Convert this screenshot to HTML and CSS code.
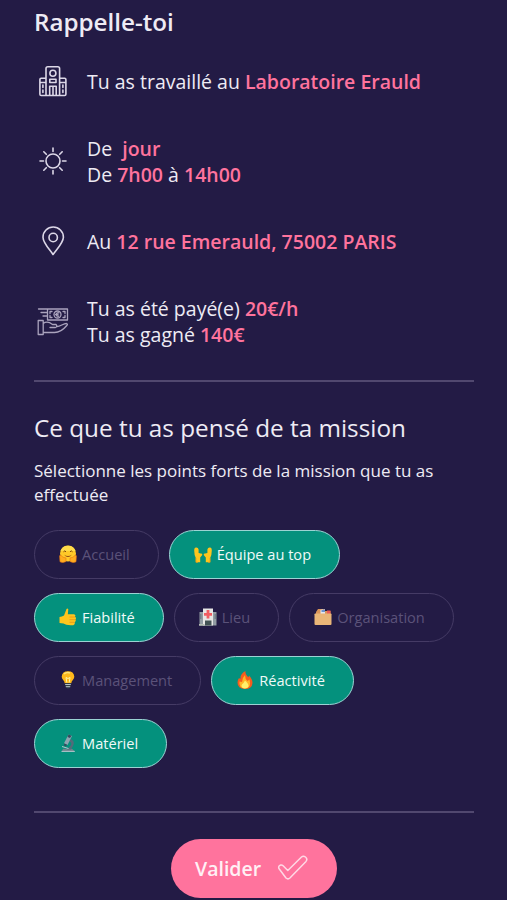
FILE: index.html
```html
<!DOCTYPE html>
<html lang="fr">
<head>
    <meta charset="UTF-8">
    <meta name="viewport" content="width=device-width, initial-scale=1.0">
    <title>Évaluation de la mission</title>
    <link rel="stylesheet" href="styles.css">
</head>
<body>

    <main class="page">
        <!-- Rappel de la mission -->
        <h1 class="recap-title">Rappelle-toi</h1>

        <ul class="recap">
            <li class="lab">
                <svg class="ico" viewBox="0 0 32 32">
                    <path d="M9 30.500V3.500Q9 1.700 10.800 1.700H20.800Q22.600 1.700 22.600 3.500V30.500M9 13.300H4.200Q2.900 13.300 2.900 14.600V29.200Q2.900 30.500 4.200 30.500H27.600Q28.900 30.500 28.900 29.200V14.600Q28.900 13.300 27.600 13.300H22.600M3 17.500H9M22.600 17.500H29"/>
                    <circle cx="15.900" cy="8.200" r="3"/>
                    <path d="M12.800 14.200H19V17.500H12.800ZM12.700 30V21.300H19.200V30M16 21.500V30M5.900 20V22.500M5.900 25V27.500M25.900 20V22.500M25.900 25V27.500"/>
                </svg>
                <p>Tu as travaillé au <b>Laboratoire Erauld</b></p>
            </li>
            <li class="hours">
                <svg class="ico" viewBox="0 0 32 32">
                    <circle cx="16" cy="16" r="7"/>
                    <path d="M16 3V6.500M16 25.500V29M3 16H6.500M25.500 16H29M6.800 6.800L9.300 9.300M22.700 22.700L25.200 25.200M6.800 25.200L9.300 22.700M22.700 9.300L25.200 6.800"/>
                </svg>
                <p>De&nbsp; <b>jour</b><br>De <b>7h00</b> à <b>14h00</b></p>
            </li>
            <li class="place">
                <svg class="ico" viewBox="0 0 32 32">
                    <path d="M16 29.500C13.500 25.500 6 18 6 12.200A10.200 10.200 0 0 1 26.400 12.200C26.400 18 18.500 25.500 16 29.500Z"/>
                    <circle cx="16.200" cy="12.500" r="4.200"/>
                </svg>
                <p>Au <b>12 rue Emerauld, 75002 PARIS</b></p>
            </li>
            <li class="pay">
                <svg class="ico thin" viewBox="0 0 32 32">
                    <path d="M10.500 4H30.500V15H10.500ZM1.500 4H10.500M4 7.500H10.500M6 11H10.500M13 8.500V6.500H15M26 6.500H28V8.500M13 10.500V12.500H15M26 12.500H28V10.500"/>
                    <circle cx="20.500" cy="9.500" r="3.500"/>
                    <path d="M21.800 7.800Q19.300 7.500 19.300 9.500T21.800 11.200M18.500 9.500H21"/>
                    <path d="M1.200 15.500H6.200V29.500H1.200ZM6.200 18.500C10 15.700 13 17.500 15.500 19.500H19Q21 21.500 18.500 22.500H13M19.500 21.500C23 22 26 18.500 29.500 18.500Q31.200 19 29.800 20.500C26.500 24.500 22 27.500 17.500 27.500H6.200"/>
                </svg>
                <p>Tu as été payé(e) <b>20€/h</b><br>Tu as gagné <b>140€</b></p>
            </li>
        </ul>

        <!-- Points forts -->
        <section class="review">
            <h2>Ce que tu as pensé de ta mission</h2>
            <p class="hint">Sélectionne les points forts de la mission que tu as effectuée</p>

            <div class="chips">
                <button class="chip">
                    <svg class="emo" viewBox="0 0 18 18">
                        <circle cx="9" cy="8.500" r="8" fill="#ffc928"/>
                        <path d="M1.500 6A8 8 0 0 1 16.500 6" fill="#ffdc4a"/>
                        <path d="M4.500 6.800Q5.800 5 7 6.800M11 6.800Q12.300 5 13.500 6.800" fill="none" stroke="#75400b"/>
                        <path d="M5 9.500Q9 12.500 13 9.500Q9 14.500 5 9.500" fill="#8d4515"/>
                        <path d="M.6 10.700Q2.500 9.500 3.500 12L7 13V16.500Q3.500 18.500 1 16.800ZM17.400 10.700Q15.500 9.500 14.500 12L11 13V16.500Q14.500 18.500 17 16.800Z" fill="#ffad20" stroke="#e87916" stroke-width=".6"/>
                    </svg>
                    <span>Accueil</span>
                </button>
                <button class="chip on">
                    <svg class="emo" viewBox="0 0 18 18">
                        <path d="M.2 5.500Q.2 2.500 2 2.500Q4.200 2.300 4.600 4.500V8L6.800 8.600Q8.600 8.600 8.300 10L6.200 12.500V17.300H1.800V13Q.2 10 .2 5.500ZM17.800 5.500Q17.800 2.500 16 2.500Q13.800 2.300 13.400 4.500V8L11.200 8.600Q9.400 8.600 9.700 10L11.800 12.500V17.300H16.200V13Q17.800 10 17.800 5.500Z" fill="#ffc51d"/>
                        <path d="M2 13V17.300H4M16 13V17.300H14" fill="none" stroke="#ec9c14" stroke-width=".8"/>
                    </svg>
                    <span>Équipe au top</span>
                </button>
                <button class="chip on">
                    <svg class="emo" viewBox="0 0 18 18">
                        <path d="M.5 9Q3 8.500 5 7.500L7.500 1Q8.500 0 9.300 1.300L8.800 6.300H15Q17.200 7 16 8.700Q18 10 16.500 11.500Q17.500 13.300 15.700 14.200Q16.500 17.300 12.500 17.300Q7 17.500 4.500 15.500L.5 15Z" fill="#ffc51d"/>
                        <path d="M10.500 9H16M10.500 11.700H16.300M10.500 14.300H15.500" stroke="#e99216" stroke-width=".8"/>
                    </svg>
                    <span>Fiabilité</span>
                </button>
                <button class="chip">
                    <svg class="emo" viewBox="0 0 18 18">
                        <path d="M.5 4H17.500V17.500H.5Z" fill="#929ca3"/>
                        <path d="M4 .5H14V17.500H4Z" fill="#e7e7e5"/>
                        <path d="M7.600 2H10.400V5H13V7.800H10.400V10.500H7.600V7.800H5V5H7.600Z" fill="#f15d62"/>
                        <path d="M6 12.500H12.500V17.500H6Z" fill="#425254"/>
                        <path d="M1.800 6V11M16.200 6V11" stroke="#62737c"/>
                        <path d="M0 16H5.500V17.700H0Z" fill="#b4bdb3"/>
                    </svg>
                    <span>Lieu</span>
                </button>
                <button class="chip">
                    <svg class="emo" viewBox="0 0 18 18">
                        <path d="M2 4L4 1H9L10 3H16.500V8H2Z" fill="#d99559"/>
                        <path d="M6.500 1.700L11 1.200V6H6.500Z" fill="#e4e6ef"/>
                        <path d="M7.500 3H11" stroke="#4677c5" stroke-width="1.500"/>
                        <path d="M13 2.500H16.500V6H13Z" fill="#ed5956"/>
                        <path d="M.5 6.300Q.5 5.500 1.300 5.500H16.700Q17.500 5.500 17.500 6.300V16Q17.500 17 16.500 17H1.500Q.5 17 .5 16Z" fill="#e9b678"/>
                    </svg>
                    <span>Organisation</span>
                </button>
                <button class="chip">
                    <svg class="emo" viewBox="0 0 18 18">
                        <path d="M5.700 12.300Q5.700 10.500 4 8.800Q2.700 7.300 2.700 5.500Q3.200 .3 9 .3Q14.800 .3 15.300 5.500Q15.300 7.300 14 8.800Q12.300 10.500 12.300 12.300Z" fill="#ffb91b"/>
                        <path d="M7.800 11.500L7 6.500L9 7.500L11 6.500L10.200 11.500" fill="none" stroke="#fff4a6"/>
                        <path d="M5 3Q8 .8 11 2" fill="none" stroke="#ffe579" stroke-width="1.500"/>
                        <path d="M6 12.300H12L11.500 16L9 17.800L6.500 16Z" fill="#303e46"/>
                        <path d="M6.200 13.500H11.800M6.800 15.700H11.200" stroke="#b9c2c8"/>
                    </svg>
                    <span>Management</span>
                </button>
                <button class="chip on">
                    <svg class="emo" viewBox="0 0 18 18">
                        <path d="M9.500 0Q8.800 2.500 12 6Q12.500 7 13 4.500Q16.500 8 16.500 12Q16 18 9 18Q1.500 17.500 1.500 11.500Q1.500 9 3 7Q4 8.300 4.500 7.500Q4 3 9.500 0Z" fill="#f55b1e"/>
                        <path d="M9 4Q9 8 11.500 10L13.500 8.500Q16 17 9 17.500Q2.500 17 3.500 10.500L6 11Q6 7 9 4Z" fill="#ffb425"/>
                        <path d="M9 9.500Q13 13 12.500 15.500Q11.500 17.500 9 17.500Q5.500 17.300 5.500 14.500Q5.700 13 7.500 12Z" fill="#fff06b"/>
                    </svg>
                    <span>Réactivité</span>
                </button>
                <button class="chip on">
                    <svg class="emo" viewBox="0 0 18 18">
                        <path d="M3 17L4 14.700H13L15.500 17Z" fill="#72838d"/>
                        <path d="M11.500 5Q16.500 7 14 12L12 15.500H8L11.700 11.500Q13.300 9 10.500 7.500Z" fill="#536b7a"/>
                        <path d="M9.500 .5L13 2L8.500 11L5 9.300Z" fill="#8ea3b0"/>
                        <path d="M9.500 .5L12.500 1.700L11 4L8.500 3ZM5.500 9.500L8 10.700L7 12.500L4.800 11.500Z" fill="#364c5e"/>
                        <path d="M3 12.500L9.500 14.500M2.500 17.400H15.800" stroke="#b9c6ce"/>
                    </svg>
                    <span>Matériel</span>
                </button>
            </div>
        </section>

        <button class="submit">
            <span>Valider</span>
            <svg class="check" viewBox="0 0 32 26">
                <path d="M1.900 13.500Q1 10.800 3.700 10Q5 9.700 6.100 10.700L10.800 15.500L24.500 2Q26.300 .4 28.500 2Q30.900 4 29 6.400L12.900 23Q11 24.800 9 23Z"/>
            </svg>
        </button>
    </main>

</body>
</html>
```

FILE: styles.css
```css
html,body{
    margin: 0;
    padding: 0;
}
body{
    height: 900px;
    overflow: hidden;
    background-color: #231b45;
    color: #eeebf4;
    font-family: "Open Sans", "Noto Sans", sans-serif;
}
h1,h2,p,ul{
    margin: 0;
    padding: 0;
}
button{
    font-family: inherit;
    border: none;
}

.page{
    display: flex;
    flex-direction: column;
    padding: 7px 33px 0 34px;
}

/* Rappel */
.recap-title{
    font-size: 24.2px;
    line-height: 30px;
    font-weight: 600;
}
.recap{
    display: flex;
    flex-direction: column;
    gap: 41px;
    margin-top: 32px;
    padding-bottom: 32px;
    list-style: none;
    border-bottom: 2px solid #51486f;
}
.recap li{
    display: flex;
    align-items: center;
    gap: 18px;
    padding-left: 3px;
    font-size: 19.5px;
    line-height: 26px;
    white-space: nowrap;
}
.recap b{
    color: #ff739d;
    font-weight: 600;
}
.ico{
    width: 32px;
    height: 32px;
    margin: -4px 0 -2px;
    fill: none;
    stroke: #dcd7e7;
    stroke-width: 1.6;
    stroke-linecap: round;
    stroke-linejoin: round;
}
.thin{
    stroke: #aaa3bd;
    stroke-width: 1.3;
}

/* Avis */
.review{
    padding: 29px 0 43px;
    border-bottom: 2px solid #51486f;
}
.review h2{
    font-size: 24.3px;
    line-height: 34px;
    font-weight: 400;
    white-space: nowrap;
}
.hint{
    margin-top: 14px;
    font-size: 17px;
    line-height: 24px;
}
.chips{
    display: flex;
    flex-wrap: wrap;
    gap: 14.300px 10px;
    margin-top: 22.5px;
}
.chip{
    display: flex;
    align-items: center;
    gap: 5px;
    box-sizing: border-box;
    height: 49px;
    padding: 0 28px 1px 24px;
    border: 1px solid #453b65;
    border-radius: 25px;
    background: none;
    color: #5b5279;
    font-size: 14.6px;
    white-space: nowrap;
}
.chip.on{
    background-color: #04917d;
    border-color: #9bd3d3;
    color: #f0faf8;
}
.emo{
    width: 18px;
    height: 18px;
}

/* Bouton valider */
.submit{
    display: flex;
    align-items: center;
    align-self: center;
    justify-content: space-between;
    width: 166px;
    height: 59px;
    margin-top: 25.5px;
    padding: 0 28px 0 24px;
    border-radius: 30px;
    background-color: #ff739d;
    color: #fff0f5;
    font-size: 19.5px;
    font-weight: 600;
}
.check{
    width: 32px;
    height: 26px;
    fill: none;
    stroke: #ffd9e5;
    stroke-width: 1.5;
    stroke-linejoin: round;
}
```
